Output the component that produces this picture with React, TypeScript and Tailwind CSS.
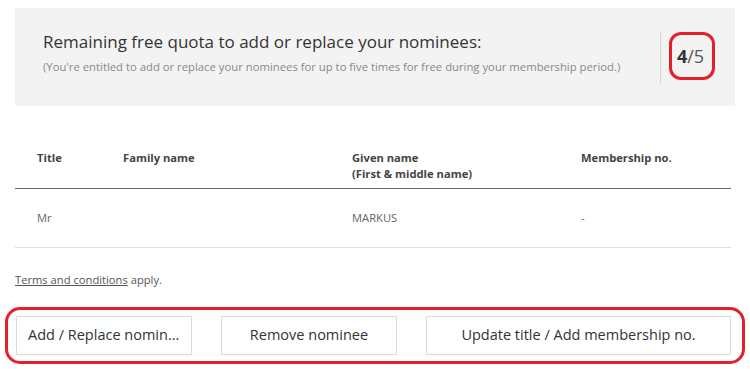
export default function App() {
  const font = { fontFamily: '"Open Sans", "Noto Sans", sans-serif' };
  return (
    <div className="h-[369px] w-[750px] overflow-hidden bg-white text-[#333]" style={font}>
      <div className="pt-2">
        <section className="mx-[15px] flex h-[98px] bg-[#f3f3f3] pl-[28px]">
          <div className="flex-1 pt-[23px]">
            <h2 className="text-[17px] leading-[22px] text-[#333]">
              Remaining free quota to add or replace your nominees:
            </h2>
            <p className="mt-[7px] text-[11.3px] leading-[14px] text-[#888]">
              (You're entitled to add or replace your nominees for up to five times for free during your membership period.)
            </p>
          </div>
          <div className="flex items-center">
            <div className="mt-[2px] h-[52px] w-px bg-[#d6d6d6]" />
            <div className="ml-[8px] mb-[2px] flex h-[48px] w-[46px] items-center justify-center rounded-[12px] border-[3px] border-[#e3202c] pr-[3px] text-[18px]">
              <span className="font-bold">4</span>
              <span className="text-[#555]">/5</span>
            </div>
            <div className="w-[20px]" />
          </div>
        </section>

        <table className="mx-[15px] mt-[34px] w-[716px] border-collapse text-left text-[11.2px]">
          <thead>
            <tr className="border-b border-[#6a6a6a] align-top">
              <th className="w-[108px] pb-[6px] pl-[22px] pt-[10px] font-bold text-[#444]">Title</th>
              <th className="w-[229px] pb-[6px] pt-[10px] font-bold text-[#444]">Family name</th>
              <th className="w-[229px] pb-[6px] pt-[10px] font-bold leading-[16px] text-[#444]">
                Given name
                <br />
                (First &amp; middle name)
              </th>
              <th className="pb-[6px] pt-[10px] font-bold text-[#444]">Membership no.</th>
            </tr>
          </thead>
          <tbody>
            <tr className="h-[59px] border-b border-[#dedede] text-[#666]">
              <td className="pl-[22px]">Mr</td>
              <td></td>
              <td>MARKUS</td>
              <td>-</td>
            </tr>
          </tbody>
        </table>

        <p className="ml-[15px] mt-[24px] text-[11.2px] text-[#555]">
          <a className="underline">Terms and conditions</a> apply.
        </p>

        <div className="mx-[5px] mt-[18px] flex h-[57px] items-center rounded-[15px] border-[3px] border-[#e3202c] pl-[8px]">
          <button className="h-[39px] w-[176px] truncate border border-[#dcdcdc] bg-white pl-[11px] pr-[10px] text-left text-[14.5px] text-[#333]">
            Add / Replace nominee
          </button>
          <button className="ml-[29px] h-[39px] w-[176px] border border-[#dcdcdc] bg-white text-[14.5px] text-[#333]">
            Remove nominee
          </button>
          <button className="ml-[29px] h-[39px] w-[305px] border border-[#dcdcdc] bg-white text-[14.5px] text-[#333]">
            Update title / Add membership no.
          </button>
        </div>
      </div>
    </div>
  );
}
